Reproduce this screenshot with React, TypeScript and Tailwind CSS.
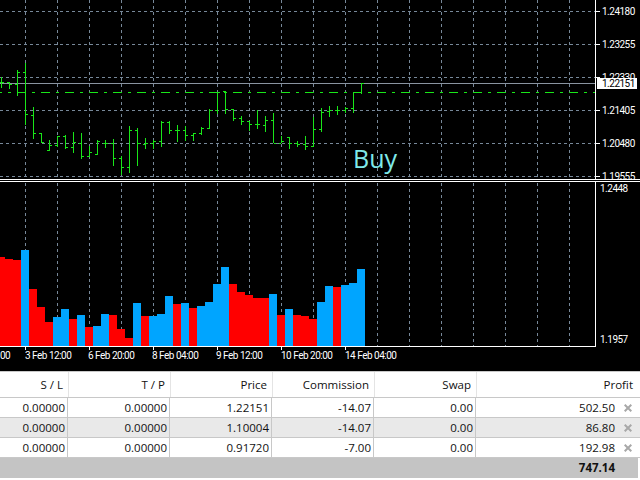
const bars3x: number[][] = [
  [4, 232, 264, 247, 247], [28, 247, 266, 247, 253], [52, 210, 288, 253, 216], [76, 190, 375, 216, 343],
  [100, 321, 416, 346, 400], [124, 400, 430, 400, 426], [148, 420, 452, 451, 435], [172, 408, 442, 436, 409],
  [196, 405, 446, 408, 442], [220, 396, 458, 442, 428], [244, 400, 476, 430, 469], [268, 438, 472, 469, 457],
  [292, 420, 466, 463, 423], [316, 420, 444, 430, 430], [340, 418, 497, 430, 475], [364, 468, 525, 475, 502],
  [388, 378, 518, 502, 391], [412, 385, 497, 391, 430], [436, 414, 446, 433, 431], [460, 420, 446, 430, 424],
  [484, 364, 440, 424, 366], [508, 364, 401, 366, 391], [532, 376, 426, 391, 391], [556, 378, 424, 391, 406],
  [580, 400, 422, 406, 401], [604, 381, 404, 401, 384], [628, 328, 388, 385, 330], [652, 275, 342, 330, 277],
  [676, 273, 342, 275, 328], [700, 328, 362, 328, 355], [724, 349, 374, 355, 364], [748, 364, 392, 364, 373],
  [772, 330, 387, 373, 373], [796, 348, 396, 376, 361], [820, 339, 430, 361, 430], [844, 408, 430, 430, 425],
  [868, 411, 446, 412, 430], [892, 423, 441, 430, 433], [916, 408, 450, 433, 439], [940, 352, 442, 439, 388],
  [964, 325, 395, 388, 337], [988, 318, 350, 335, 331], [1012, 318, 346, 331, 331], [1036, 320, 338, 331, 325],
  [1060, 277, 338, 325, 278], [1084, 250, 283, 278, 250],
];

const hist: [number, string][] = [
  [257, "r"], [259, "r"], [260, "r"], [250, "b"], [289, "r"], [307, "r"], [322, "r"], [317, "b"], [309, "b"],
  [319, "r"], [315, "b"], [327, "r"], [326, "b"], [314, "b"], [315, "r"], [329, "r"], [338, "r"], [303, "b"],
  [316, "r"], [316, "b"], [314, "b"], [296, "b"], [304, "r"], [303, "b"], [308, "r"], [306, "b"], [302, "b"],
  [284, "b"], [267, "b"], [284, "r"], [292, "r"], [295, "r"], [298, "r"], [298, "r"], [294, "b"], [315, "r"],
  [309, "b"], [315, "r"], [316, "r"], [319, "r"], [302, "b"], [286, "b"], [287, "r"], [285, "b"], [283, "b"],
  [269, "b"],
];

const vGrid = Array.from({ length: 18 }, (_, i) => 25 + i * 32);
const hGrid: [number, string][] = [
  [11, "1.24180"], [44, "1.23255"], [77, "1.22330"], [110, "1.21405"], [143, "1.20480"], [176, "1.19555"],
];
const timeLabels: [number, string][] = [
  [0, "00"], [25, "3 Feb 12:00"], [88, "6 Feb 20:00"], [152, "8 Feb 04:00"], [216, "9 Feb 12:00"],
  [281, "10 Feb 20:00"], [345, "14 Feb 04:00"],
];

const GRID = "#778899";
const GREEN = "#19e619";
const font = "Roboto, sans-serif";

function Chart() {
  return (
    <svg width={640} height={371} className="block shrink-0" shapeRendering="crispEdges">
      {vGrid.map((x) => (
        <g key={x} stroke={GRID} strokeDasharray="3 3">
          <line x1={x + 0.5} y1={0} x2={x + 0.5} y2={178} />
          <line x1={x + 0.5} y1={183} x2={x + 0.5} y2={346} />
        </g>
      ))}
      {hGrid.map(([y]) => (
        <line key={y} x1={0} x2={595} y1={y + 0.5} y2={y + 0.5} stroke={GRID} strokeDasharray="3 3" />
      ))}
      <line x1={0} x2={595} y1={83.5} y2={83.5} stroke="#8a94a0" />
      <line x1={0} x2={595} y1={92.5} y2={92.5} stroke={GREEN} strokeDasharray="9 6 3 6" strokeDashoffset={7} />
      {bars3x.map(([x3, hi, lo, o, c]) => {
        const x = Math.floor(x3 / 3);
        return (
          <g key={x3} stroke={GREEN}>
            <line x1={x + 0.5} x2={x + 0.5} y1={Math.round(hi / 3)} y2={Math.round(lo / 3)} />
            <line x1={x - 2} x2={x} y1={Math.floor(o / 3) + 0.5} y2={Math.floor(o / 3) + 0.5} />
            <line x1={x + 1} x2={x + 3} y1={Math.floor(c / 3) + 0.5} y2={Math.floor(c / 3) + 0.5} />
          </g>
        );
      })}
      {hist.map(([top, col], i) => (
        <rect key={i} x={-3 + i * 8} y={top} width={8} height={346 - top} fill={col === "r" ? "#ff0000" : "#00a5ff"} />
      ))}
      <g stroke="#ffffff">
        <line x1={0} x2={640} y1={179.5} y2={179.5} />
        <line x1={0} x2={640} y1={181.5} y2={181.5} />
        <line x1={595.5} x2={595.5} y1={0} y2={179} />
        <line x1={595.5} x2={595.5} y1={182} y2={347} />
        <line x1={0} x2={596} y1={346.5} y2={346.5} />
        {hGrid.map(([y]) => (
          <line key={y} x1={596} x2={600} y1={y + 0.5} y2={y + 0.5} />
        ))}
        {[25, 89, 153, 217, 281, 345].map((x) => (
          <line key={x} x1={x + 0.5} x2={x + 0.5} y1={347} y2={350} />
        ))}
      </g>
      <g fill="#ffffff" fontFamily={font} fontSize={10} letterSpacing={-0.5} shapeRendering="auto">
        {hGrid.map(([y, t]) => (
          <text key={y} x={602} y={y + 4}>{t}</text>
        ))}
        <rect x={597} y={78} width={40} height={11} fill="#ffffff" shapeRendering="crispEdges" />
        <text x={602} y={87} fill="#000000">1.22151</text>
        <text x={600} y={192}>1.2448</text>
        <text x={600} y={343}>1.1957</text>
        {timeLabels.map(([x, t]) => (
          <text key={t} x={x} y={359}>{t}</text>
        ))}
        <text x={353} y={168} fontFamily="'Open Sans', sans-serif" fontSize={25} letterSpacing={0} fill="#7fe9e9">Buy</text>
      </g>
    </svg>
  );
}

const columns = "grid-cols-[69px_102px_102px_102px_102px_163px]";
const rows = [
  ["0.00000", "0.00000", "1.22151", "-14.07", "0.00", "502.50"],
  ["0.00000", "0.00000", "1.10004", "-14.07", "0.00", "86.80"],
  ["0.00000", "0.00000", "0.91720", "-7.00", "0.00", "192.98"],
];
const header = ["S / L", "T / P", "Price", "Commission", "Swap", "Profit"];

function CloseX() {
  return (
    <svg width={8} height={8} viewBox="0 0 8 8" className="ml-[9px] mr-[8px]" stroke="#a8a8a8" strokeWidth={2}>
      <path d="M0.7 0.7L7.3 7.3M7.3 0.7L0.7 7.3" />
    </svg>
  );
}

function Table() {
  return (
    <div className="h-[109px] w-[640px] border-t border-t-[#c8c8c8] bg-white text-[11.5px] text-[#111111] font-['Open_Sans',sans-serif]">
      <div className={`grid h-[26px] border-b border-[#c8c8c8] ${columns}`}>
        {header.map((h, i) => (
          <div key={h} className={`flex items-center justify-end ${i < 5 ? "border-r border-[#e4e4e4] pr-[5px]" : "pr-[7px]"}`}>
            {h}
          </div>
        ))}
      </div>
      {rows.map((row, r) => (
        <div key={r} className={`grid h-[20px] border-b border-[#c8c8c8] ${columns} ${r === 1 ? "bg-[#e9e9e9]" : "bg-white"}`}>
          {row.map((v, i) =>
            i < 5 ? (
              <div key={i} className="flex items-center justify-end border-r border-[#c8c8c8] pr-[2px] mr-[1px]">{v}</div>
            ) : (
              <div key={i} className="flex items-center justify-end">{v}<CloseX /></div>
            ),
          )}
        </div>
      ))}
      <div className="flex h-[20px] w-[638px] items-center justify-end bg-[#c4c4c4] pr-[23px] font-bold">747.14</div>
    </div>
  );
}

export default function App() {
  return (
    <div className="flex h-[480px] w-[640px] flex-col overflow-hidden bg-black">
      <Chart />
      <Table />
    </div>
  );
}
